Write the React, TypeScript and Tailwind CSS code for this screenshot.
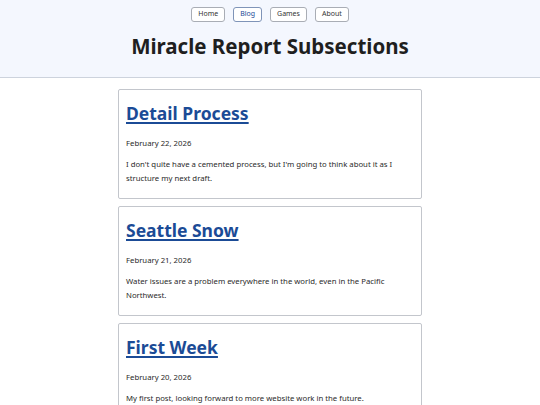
const posts = [
  {
    title: 'Detail Process',
    date: 'February 22, 2026',
    body: "I don't quite have a cemented process, but I'm going to think about it as I structure my next draft.",
  },
  {
    title: 'Seattle Snow',
    date: 'February 21, 2026',
    body: 'Water issues are a problem everywhere in the world, even in the Pacific Northwest.',
  },
  {
    title: 'First Week',
    date: 'February 20, 2026',
    body: 'My first post, looking forward to more website work in the future.',
  },
]

const nav = ['Home', 'Blog', 'Games', 'About']

export default function App() {
  return (
    <div className="min-h-screen bg-white text-[#222] font-['Noto_Sans',sans-serif]">
      <header className="bg-[#f4f7fe] border-b border-[#cdd3dd] h-[78px] flex flex-col items-center">
        <nav className="flex gap-[8px] mt-[7px]">
          {nav.map((n) => (
            <a
              key={n}
              className={
                'h-[15px] px-[6px] flex items-center text-[7px] rounded-[3px] border bg-white ' +
                (n === 'Blog'
                  ? 'border-[#7f94b8] text-[#1c4a97]'
                  : 'border-[#a9adb5] text-[#333]')
              }
            >
              {n}
            </a>
          ))}
        </nav>
        <h1 className="mt-[9px] text-[20.5px] font-bold leading-[30px] text-[#1f1f1f]">
          Miracle Report Subsections
        </h1>
      </header>
      <main className="flex flex-col items-center gap-[7px] pt-[11px]">
        {posts.map((p) => (
          <article
            key={p.title}
            className="w-[304px] border border-[#c3c6cc] rounded-[2px] px-[7px] pt-[9px] pb-[13px]"
          >
            <h2 className="text-[17.5px] font-bold leading-[28px]">
              <a className="text-[#1b4b96] underline decoration-[1.5px] underline-offset-[2px]">{p.title}</a>
            </h2>
            <p className="mt-[10px] text-[7.75px] leading-[12px] text-[#2a2a2a]">{p.date}</p>
            <p className="mt-[8px] text-[7.75px] leading-[14px] text-[#2a2a2a]">{p.body}</p>
          </article>
        ))}
      </main>
    </div>
  )
}
